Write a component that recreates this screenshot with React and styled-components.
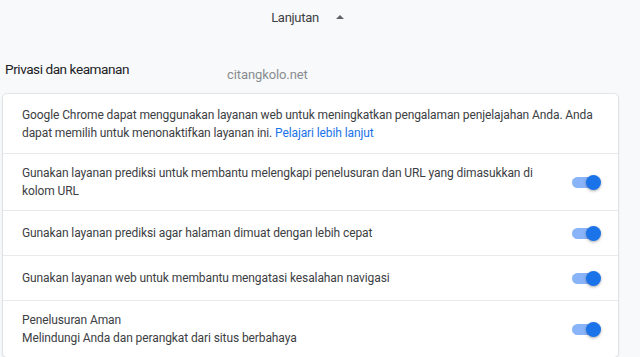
import React from "react";
import styled, { createGlobalStyle } from "styled-components";

const Global = createGlobalStyle`
  html, body { margin: 0; padding: 0; background: #f8f9fa; }
  body { font-family: Roboto, "Noto Sans", sans-serif; overflow: hidden; }
`;

const Page = styled.div`
  position: relative;
  width: 640px;
  height: 357px;
  overflow: hidden;
  background: #f8f9fa;
`;

const AdvancedBar = styled.div`
  display: flex;
  justify-content: center;
  align-items: center;
  gap: 16px;
  height: 34px;
  padding-right: 24px;
  color: #3c4043;
  font-size: 13px;
`;

const AdvLabel = styled.span`
  letter-spacing: -0.3px;
`;

const Caret = styled.svg`
  width: 10px;
  height: 10px;
`;

const SectionTitle = styled.div`
  margin-top: 25px;
  padding-left: 5px;
  height: 20px;
  line-height: 20px;
  font-size: 13.6px;
  color: #202124;
  letter-spacing: -0.45px;
`;

const Watermark = styled.div`
  position: absolute;
  left: 227px;
  top: 67px;
  font-size: 13px;
  color: #888c90;
  letter-spacing: -0.1px;
`;

const Card = styled.div`
  margin: 15px 0 0 3px;
  width: 615px;
  background: #fff;
  border-radius: 4px;
  box-shadow: 0 0 0 1px rgba(60, 64, 67, 0.08), 0 1px 3px rgba(60, 64, 67, 0.15);
`;

const Row = styled.div`
  display: flex;
  align-items: center;
  gap: 20px;
  min-height: ${(p) => (p.$tall ? "36px" : "44px")};
  padding: ${(p) => (p.$first ? "12px" : p.$tall ? "10px" : "0")} 18px
    ${(p) => (p.$first ? "11px" : p.$tall ? "10px" : "0")} 19px;
  border-top: ${(p) => (p.$first ? "none" : "1px solid #e8eaed")};
  font-size: 12px;
  line-height: 18px;
  letter-spacing: -0.1px;
  color: #3c4043;
`;

const Text = styled.div`
  flex: 1;
  white-space: nowrap;
`;

const Link = styled.a`
  color: #1a73e8;
  text-decoration: none;
`;

const Track = styled.div`
  position: relative;
  width: 26px;
  height: 11px;
  border-radius: 6px;
  background: #8ab4f8;
  margin-right: 2px;
  flex-shrink: 0;
`;

const Knob = styled.div`
  position: absolute;
  right: -3px;
  top: -2px;
  width: 15px;
  height: 15px;
  border-radius: 50%;
  background: #1a73e8;
  box-shadow: 0 1px 3px rgba(0, 0, 0, 0.35);
`;

const Toggle = () => (
  <Track>
    <Knob />
  </Track>
);

export default function App() {
  return (
    <Page>
      <Global />
      <AdvancedBar>
        <AdvLabel>Lanjutan</AdvLabel>
        <Caret viewBox="0 0 10 10">
          <path d="M1 7 L5 3 L9 7 Z" fill="#5f6368" />
        </Caret>
      </AdvancedBar>
      <SectionTitle>Privasi dan keamanan</SectionTitle>
      <Watermark>citangkolo.net</Watermark>
      <Card>
        <Row $tall $first>
          <Text>
            Google Chrome dapat menggunakan layanan web untuk meningkatkan pengalaman penjelajahan Anda. Anda
            <br />
            dapat memilih untuk menonaktifkan layanan ini. <Link>Pelajari lebih lanjut</Link>
          </Text>
        </Row>
        <Row $tall>
          <Text>
            Gunakan layanan prediksi untuk membantu melengkapi penelusuran dan URL yang dimasukkan di
            <br />
            kolom URL
          </Text>
          <Toggle />
        </Row>
        <Row>
          <Text>Gunakan layanan prediksi agar halaman dimuat dengan lebih cepat</Text>
          <Toggle />
        </Row>
        <Row>
          <Text>Gunakan layanan web untuk membantu mengatasi kesalahan navigasi</Text>
          <Toggle />
        </Row>
        <Row $tall>
          <Text>
            Penelusuran Aman
            <br />
            Melindungi Anda dan perangkat dari situs berbahaya
          </Text>
          <Toggle />
        </Row>
      </Card>
    </Page>
  );
}
